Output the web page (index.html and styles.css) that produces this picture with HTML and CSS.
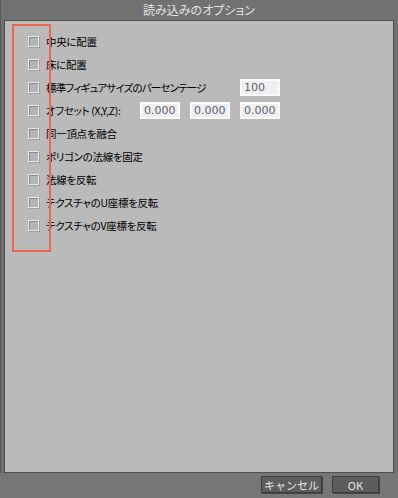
FILE: index.html
```html
<!DOCTYPE html>
<html lang="ja">
<head>
  <meta charset="UTF-8" />
  <title>読み込みのオプション</title>
  <link rel="stylesheet" href="styles.css">
</head>
<body>
  <div class="dialog">
    <div class="titlebar">読み込みのオプション</div>

    <div class="panel">
      <div class="highlight"></div>

      <div class="row"><span class="check"></span><label>中央に配置</label></div>
      <div class="row"><span class="check"></span><label>床に配置</label></div>
      <div class="row">
        <span class="check"></span><label class="tight">標準フィギュアサイズのパーセンテージ</label>
        <div class="fields"><input type="text" value="100" /></div>
      </div>
      <div class="row">
        <span class="check"></span><label>オフセット (X,Y,Z):</label>
        <div class="fields">
          <input type="text" value="0.000" />
          <input type="text" value="0.000" />
          <input type="text" value="0.000" />
        </div>
      </div>
      <div class="row"><span class="check"></span><label>同一頂点を融合</label></div>
      <div class="row"><span class="check"></span><label>ポリゴンの法線を固定</label></div>
      <div class="row"><span class="check"></span><label>法線を反転</label></div>
      <div class="row"><span class="check"></span><label>テクスチャのU座標を反転</label></div>
      <div class="row"><span class="check"></span><label>テクスチャのV座標を反転</label></div>
    </div>

    <div class="footer">
      <button class="btn cancel">キャンセル</button>
      <button class="btn ok">OK</button>
    </div>
  </div>
</body>
</html>
```

FILE: styles.css
```css
body { margin: 0; background: #707070; font-family: "Noto Sans CJK JP", "DejaVu Sans", sans-serif; }
.dialog { width: 398px; height: 498px; display: flex; flex-direction: column; background: #717171; box-shadow: inset 1px 0 0 #5a5a5a; }
.titlebar { height: 20px; line-height: 19px; text-align: center; color: #e2e2e2; font-size: 12px; font-feature-settings: "palt"; }
.panel { position: relative; margin: 0 4px; background: #bababa; border: 1px solid #4e4e4e; padding: 9px 0 0 23px; box-sizing: border-box; height: 453px; }
.highlight { position: absolute; left: 7px; top: 3px; width: 35px; height: 224px; border: 2px solid #ef6352; }
.row { height: 23px; display: flex; align-items: center; font-size: 10.5px; letter-spacing: -0.3px; color: #000; font-feature-settings: "palt"; }
.tight { letter-spacing: -0.8px; }
.check { width: 9px; height: 9px; border: 1px solid #e8e8e8; background: #b4b4b4; box-shadow: inset 1px 1px 0 #8a8a8a, 1px 1px 0 #a0a0a0; margin-right: 7px; flex: none; }
.fields { margin-left: auto; margin-right: 113px; display: flex; gap: 10px; }
.fields input { width: 40px; height: 17px; box-sizing: border-box; border: 2px solid #fafafa; background: #efefef; padding: 0 2px; font-family: "DejaVu Sans", sans-serif; font-size: 11px; letter-spacing: 0; color: #5e6272; }
.footer { flex: 1; display: flex; justify-content: flex-end; align-items: flex-start; gap: 10px; padding: 3px 19px 0 0; background: #767676; }
.btn { height: 17px; border: 1px solid #3c3c3c; background: #5d5d5d; color: #e6e6e6; font-family: "Noto Sans CJK JP", sans-serif; font-size: 11px; line-height: 14px; padding: 0; box-shadow: 1px 1px 0 #474747; }
.cancel { width: 61px; }
.ok { width: 47px; }
```
